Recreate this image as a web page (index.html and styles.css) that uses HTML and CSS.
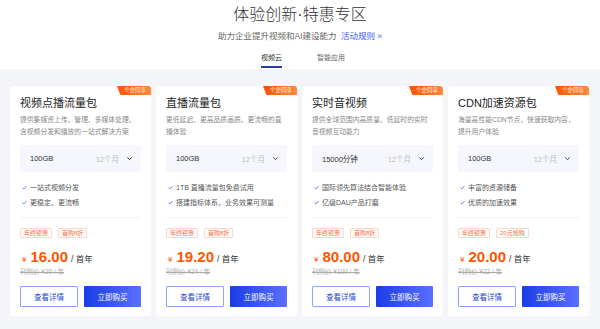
FILE: index.html
```html
<!DOCTYPE html>
<html lang="zh-CN">
<head>
    <meta charset="UTF-8">
    <meta name="viewport" content="width=device-width, initial-scale=1.0">
    <title>体验创新·特惠专区</title>
    <link rel="stylesheet" href="styles.css">
</head>
<body>
    <!-- 顶部标题 -->
    <div class="header">
        <h1>体验创新·特惠专区</h1>
        <p class="subtitle">助力企业提升视频和AI建设能力 <a href="#" class="rules">活动规则 »</a></p>
        <div class="tabs">
            <span class="tab active">视频云</span>
            <span class="tab">智能应用</span>
        </div>
    </div>

    <!-- 产品卡片 -->
    <div class="cards">
        <div class="card">
            <span class="badge">个企同享</span>
            <h3>视频点播流量包</h3>
            <p class="desc">提供集媒资上传、管理、多媒体处理、<br>含视频分发和播放的一站式解决方案</p>
            <div class="select"><span class="spec">100GB</span><span class="period">12个月</span><svg class="chevron" viewBox="0 0 8 8"><path d="M1.5 2.8 L4 5.2 L6.5 2.8"/></svg></div>
            <ul class="features">
                <li><svg class="check" viewBox="0 0 8 8"><path d="M1 4.3 L3 6.2 L7 1.8"/></svg>一站式视频分发</li>
                <li><svg class="check" viewBox="0 0 8 8"><path d="M1 4.3 L3 6.2 L7 1.8"/></svg>更稳定、更流畅</li>
            </ul>
            <div class="tags"><span class="tag">年终钜惠</span><span class="tag">首购8折</span></div>
            <div class="price"><span class="yen">¥</span><span class="amount">16.00</span><span class="unit">/ 首年</span></div>
            <div class="list-price">刊例价 ¥20 / 年</div>
            <div class="actions"><button class="btn-outline">查看详情</button><button class="btn-primary">立即购买</button></div>
        </div>

        <div class="card">
            <span class="badge">个企同享</span>
            <h3>直播流量包</h3>
            <p class="desc">更低延迟、更高品质画质、更流畅的直<br>播体验</p>
            <div class="select"><span class="spec">100GB</span><span class="period">12个月</span><svg class="chevron" viewBox="0 0 8 8"><path d="M1.5 2.8 L4 5.2 L6.5 2.8"/></svg></div>
            <ul class="features">
                <li><svg class="check" viewBox="0 0 8 8"><path d="M1 4.3 L3 6.2 L7 1.8"/></svg>1TB 直播流量包免费试用</li>
                <li><svg class="check" viewBox="0 0 8 8"><path d="M1 4.3 L3 6.2 L7 1.8"/></svg>搭建指标体系，业务效果可测量</li>
            </ul>
            <div class="tags"><span class="tag">年终钜惠</span><span class="tag">首购8折</span></div>
            <div class="price"><span class="yen">¥</span><span class="amount">19.20</span><span class="unit">/ 首年</span></div>
            <div class="list-price">刊例价 ¥24 / 年</div>
            <div class="actions"><button class="btn-outline">查看详情</button><button class="btn-primary">立即购买</button></div>
        </div>

        <div class="card">
            <span class="badge">个企同享</span>
            <h3>实时音视频</h3>
            <p class="desc">提供全球范围内高质量、低延时的实时<br>音视频互动能力</p>
            <div class="select"><span class="spec">15000分钟</span><span class="period">12个月</span><svg class="chevron" viewBox="0 0 8 8"><path d="M1.5 2.8 L4 5.2 L6.5 2.8"/></svg></div>
            <ul class="features">
                <li><svg class="check" viewBox="0 0 8 8"><path d="M1 4.3 L3 6.2 L7 1.8"/></svg>国际领先算法结合智能体验</li>
                <li><svg class="check" viewBox="0 0 8 8"><path d="M1 4.3 L3 6.2 L7 1.8"/></svg>亿级DAU产品打磨</li>
            </ul>
            <div class="tags"><span class="tag">年终钜惠</span><span class="tag">首购8折</span></div>
            <div class="price"><span class="yen">¥</span><span class="amount">80.00</span><span class="unit">/ 首年</span></div>
            <div class="list-price">刊例价 ¥100 / 年</div>
            <div class="actions"><button class="btn-outline">查看详情</button><button class="btn-primary">立即购买</button></div>
        </div>

        <div class="card">
            <span class="badge">个企同享</span>
            <h3>CDN加速资源包</h3>
            <p class="desc">海量高性能CDN节点，快速获取内容，<br>提升用户体验</p>
            <div class="select"><span class="spec">100GB</span><span class="period">12个月</span><svg class="chevron" viewBox="0 0 8 8"><path d="M1.5 2.8 L4 5.2 L6.5 2.8"/></svg></div>
            <ul class="features">
                <li><svg class="check" viewBox="0 0 8 8"><path d="M1 4.3 L3 6.2 L7 1.8"/></svg>丰富的资源储备</li>
                <li><svg class="check" viewBox="0 0 8 8"><path d="M1 4.3 L3 6.2 L7 1.8"/></svg>优质的加速效果</li>
            </ul>
            <div class="tags"><span class="tag">年终钜惠</span><span class="tag">20元抢购</span></div>
            <div class="price"><span class="yen">¥</span><span class="amount">20.00</span><span class="unit">/ 首年</span></div>
            <div class="list-price">刊例价 ¥22 / 年</div>
            <div class="actions"><button class="btn-outline">查看详情</button><button class="btn-primary">立即购买</button></div>
        </div>
    </div>
</body>
</html>
```

FILE: styles.css
```css
html, body {
    margin: 0;
    padding: 0;
}
body {
    font-family: "Liberation Sans", "Noto Sans CJK SC", sans-serif;
    background-color: #f4f5f8;
    color: #333;
}
.header {
    background: #fff;
    height: 69px;
    text-align: center;
    padding-top: 5px;
    box-sizing: border-box;
}
h1 {
    margin: 0;
    font-size: 16px;
    line-height: 20px;
    font-weight: 300;
    color: #333;
}
.subtitle {
    margin: 6px 0 0;
    font-size: 8.5px;
    line-height: 11px;
    color: #666;
}
.rules {
    color: #3d5afe;
    text-decoration: none;
    margin-left: 2px;
}
.tabs {
    display: flex;
    justify-content: center;
    gap: 35px;
    margin-top: 11px;
    padding-left: 6px;
}
.tab {
    font-size: 7px;
    line-height: 9px;
    color: #666;
    padding-bottom: 4px;
    border-bottom: 2px solid transparent;
}
.tab.active {
    color: #333;
    border-bottom-color: #2b3d99;
}
.cards {
    display: grid;
    grid-template-columns: repeat(4, 1fr);
    gap: 5px;
    padding: 17px 11px 13px 10px;
}
.card {
    position: relative;
    background: #fff;
    border-radius: 3px;
    padding: 10px 10px 9px;
    overflow: hidden;
}
.badge {
    position: absolute;
    top: 0;
    right: 0;
    width: 34px;
    height: 9px;
    line-height: 9px;
    font-size: 5.5px;
    text-align: center;
    color: #fff;
    padding-left: 2px;
    box-sizing: border-box;
    background: linear-gradient(90deg, #ff5300, #ff8a3d);
    clip-path: polygon(0 0, 100% 0, 100% 100%, 10% 100%);
}
h3 {
    margin: 0;
    font-size: 11px;
    line-height: 14px;
    font-weight: 400;
    color: #222;
}
.desc {
    margin: 4px 0 0;
    font-size: 6.8px;
    line-height: 12px;
    color: #888;
    white-space: nowrap;
}
.select {
    display: flex;
    align-items: center;
    height: 27px;
    margin-top: 7px;
    padding: 0 8px 0 10px;
    background: #f5f7fd;
    border-radius: 2px;
    font-size: 7.5px;
}
.spec {
    flex-grow: 1;
    color: #333;
}
.period {
    color: #bbb;
}
.chevron {
    width: 7px;
    height: 7px;
    margin-left: 7px;
    fill: none;
    stroke: #333;
    stroke-width: 1.1;
}
.features {
    list-style: none;
    margin: 8px 0 0;
    padding: 0 0 7px;
    border-bottom: 1px solid #f2f3f5;
}
.features li {
    display: flex;
    align-items: center;
    font-size: 7px;
    line-height: 15px;
    color: #555;
    white-space: nowrap;
}
.check {
    width: 5px;
    height: 5px;
    margin: 0 3px 0 2px;
    fill: none;
    stroke: #3d5afe;
    stroke-width: 1.3;
}
.tags {
    display: flex;
    gap: 6px;
    margin-top: 10px;
}
.tag {
    font-size: 6px;
    line-height: 8px;
    padding: 0 3px;
    color: #ff6a3d;
    border: 1px solid #fdd8c8;
    border-radius: 1px;
}
.price {
    display: flex;
    align-items: baseline;
    margin-top: 10px;
    height: 19px;
    padding-left: 2px;
}
.yen {
    font-size: 8px;
    color: #ff5500;
    margin-right: 4px;
}
.amount {
    font-size: 15px;
    font-weight: bold;
    color: #ff5500;
    margin-right: 3px;
}
.unit {
    font-size: 8.5px;
    color: #333;
}
.list-price {
    font-size: 6.5px;
    line-height: 10px;
    color: #aaa;
    text-decoration: line-through;
}
.actions {
    display: grid;
    grid-template-columns: 58px 1fr;
    gap: 6px;
    margin-top: 9px;
}
.actions button {
    height: 21px;
    font-family: inherit;
    font-size: 7.5px;
    border-radius: 1px;
    cursor: pointer;
}
.btn-outline {
    background: #fff;
    color: #2a45d6;
    border: 1px solid #8ea3ff;
}
.btn-primary {
    background: linear-gradient(90deg, #1b3de6, #5a6fff);
    color: #fff;
    border: none;
}
```
